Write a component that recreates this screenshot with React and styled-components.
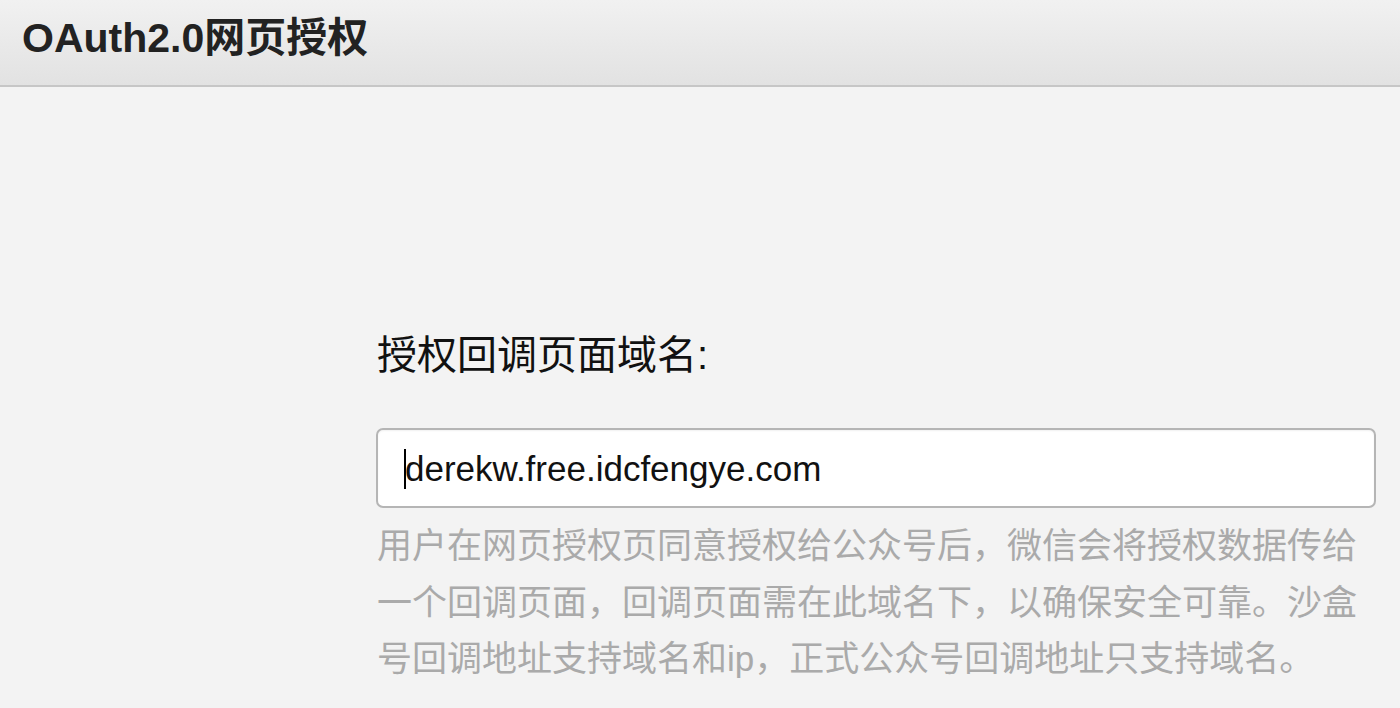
import React from "react";
import styled, { createGlobalStyle } from "styled-components";

const GlobalStyle = createGlobalStyle`
  html, body {
    margin: 0;
    padding: 0;
    background: #f3f3f3;
  }
  body {
    font-family: "Liberation Sans", "Noto Sans CJK SC", sans-serif;
  }
`;

const Page = styled.div`
  width: 1400px;
  height: 708px;
  overflow: hidden;
  background: #f3f3f3;
`;

const Header = styled.div`
  height: 87px;
  box-sizing: border-box;
  padding-left: 22px;
  display: flex;
  align-items: center;
  padding-bottom: 18px;
  background: linear-gradient(to bottom, #f1f1f1 0%, #e2e2e2 100%);
  border-bottom: 2px solid #c6c6c6;
`;

const Title = styled.h1`
  margin: 0;
  font-size: 41px;
  font-weight: 700;
  color: #222;
`;

const Form = styled.div`
  margin-left: 376px;
  width: 1000px;
  padding-top: 243px;
  display: flex;
  flex-direction: column;
`;

const Label = styled.div`
  font-size: 40px;
  line-height: 50px;
  color: #111;
  margin-left: 1px;
`;

const Field = styled.div`
  margin-top: 48px;
  height: 80px;
  box-sizing: border-box;
  border: 2px solid #b5b5b5;
  border-radius: 7px;
  background: #fff;
  display: flex;
  align-items: center;
  padding-left: 26px;
  padding-top: 2px;
  font-size: 35px;
  color: #111;
  box-shadow: inset 0 1px 2px rgba(0, 0, 0, 0.06);
`;

const Caret = styled.span`
  display: inline-block;
  width: 2px;
  height: 40px;
  background: #000;
  margin-right: -1px;
`;

const Help = styled.p`
  margin: 10px 0 0 1px;
  font-size: 35px;
  line-height: 56.5px;
  color: #aaaaaa;
`;

export default function App() {
  return (
    <Page>
      <GlobalStyle />
      <Header>
        <Title>OAuth2.0网页授权</Title>
      </Header>
      <Form>
        <Label>授权回调页面域名:</Label>
        <Field>
          <Caret />
          derekw.free.idcfengye.com
        </Field>
        <Help>
          用户在网页授权页同意授权给公众号后，微信会将授权数据传给一个回调页面，回调页面需在此域名下，以确保安全可靠。沙盒号回调地址支持域名和ip，正式公众号回调地址只支持域名。
        </Help>
      </Form>
    </Page>
  );
}
